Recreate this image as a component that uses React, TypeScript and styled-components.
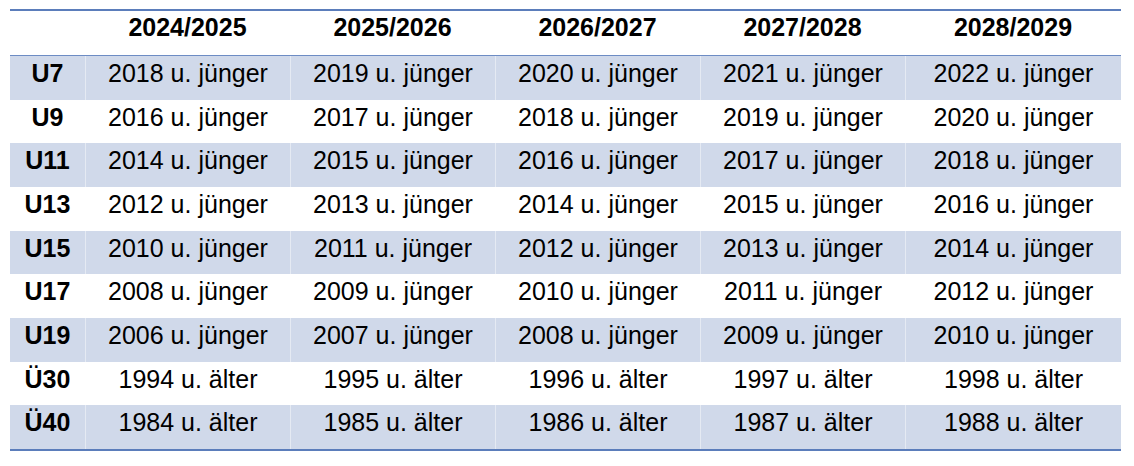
import React from "react";
import styled, { createGlobalStyle } from "styled-components";

const GlobalStyle = createGlobalStyle`
  html, body {
    margin: 0;
    padding: 0;
    background: #ffffff;
  }
  body {
    font-family: "Liberation Sans", Arial, Helvetica, sans-serif;
    color: #000000;
  }
`;

const Page = styled.div`
  width: 1134px;
  height: 466px;
  padding: 9px 0 0 10px;
  box-sizing: border-box;
`;

const Table = styled.div`
  width: 1111px;
  display: flex;
  flex-direction: column;
  border-top: 2px solid #5b7dbb;
  border-bottom: 2px solid #5b7dbb;
`;

const COLS = "75px 205px 205px 205px 205px 216px";

const HeaderRow = styled.div`
  display: grid;
  grid-template-columns: ${COLS};
  height: 45px;
  box-sizing: border-box;
  border-bottom: 1px solid #6d8cc4;
`;

const HeaderCell = styled.div`
  font-size: 25px;
  font-weight: bold;
  line-height: 28px;
  text-align: center;
  padding-top: 2px;
`;

const Row = styled.div<{ $shaded: boolean }>`
  display: grid;
  grid-template-columns: ${COLS};
  height: 43.67px;
  background: ${(p) => (p.$shaded ? "#d0d9ea" : "#ffffff")};
`;

const Cell = styled.div<{ $shaded: boolean; $label?: boolean }>`
  font-size: 25px;
  font-weight: ${(p) => (p.$label ? "bold" : "normal")};
  line-height: 28px;
  text-align: center;
  padding-top: 3px;
  box-sizing: border-box;
  border-left: 1px solid
    ${(p) => (p.$shaded ? "rgba(255,255,255,0.45)" : "transparent")};
  &:first-child {
    border-left: none;
  }
`;

const seasons = ["2024/2025", "2025/2026", "2026/2027", "2027/2028", "2028/2029"];

const rows: { label: string; start: number; suffix: string }[] = [
  { label: "U7", start: 2018, suffix: "u. jünger" },
  { label: "U9", start: 2016, suffix: "u. jünger" },
  { label: "U11", start: 2014, suffix: "u. jünger" },
  { label: "U13", start: 2012, suffix: "u. jünger" },
  { label: "U15", start: 2010, suffix: "u. jünger" },
  { label: "U17", start: 2008, suffix: "u. jünger" },
  { label: "U19", start: 2006, suffix: "u. jünger" },
  { label: "Ü30", start: 1994, suffix: "u. älter" },
  { label: "Ü40", start: 1984, suffix: "u. älter" },
];

export default function App() {
  return (
    <>
      <GlobalStyle />
      <Page>
        <Table>
          <HeaderRow>
            <HeaderCell />
            {seasons.map((s) => (
              <HeaderCell key={s}>{s}</HeaderCell>
            ))}
          </HeaderRow>
          {rows.map((r, i) => {
            const shaded = i % 2 === 0;
            return (
              <Row key={r.label} $shaded={shaded}>
                <Cell $shaded={shaded} $label>
                  {r.label}
                </Cell>
                {seasons.map((s, j) => (
                  <Cell key={s} $shaded={shaded}>
                    {`${r.start + j} ${r.suffix}`}
                  </Cell>
                ))}
              </Row>
            );
          })}
        </Table>
      </Page>
    </>
  );
}
